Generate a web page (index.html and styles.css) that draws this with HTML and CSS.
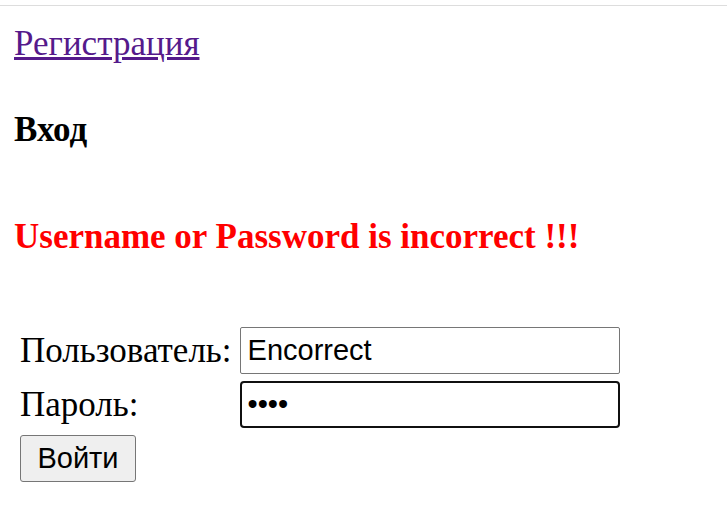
FILE: index.html
```html
<!DOCTYPE html>
<html lang="ru">
<head>
<meta charset="utf-8">
<title>Вход</title>
<link rel="stylesheet" href="styles.css">
</head>
<body>
<div class="topline"></div>
<main class="page">
  <a class="reg-link" href="#">Регистрация</a>
  <h4 class="title">Вход</h4>
  <h3 class="error">Username or Password is incorrect !!!</h3>
  <form class="login-form">
    <label class="label" for="user">Пользователь:</label>
    <input class="field" id="user" type="text" value="Encorrect">
    <label class="label" for="pass">Пароль:</label>
    <input class="field field-focus" id="pass" type="password" value="1234">
    <button class="submit" type="button">Войти</button>
  </form>
</main>
</body>
</html>
```
FILE: styles.css
```css
html, body {
  margin: 0;
  padding: 0;
  background: #ffffff;
}
body {
  font-family: "Liberation Serif", "Times New Roman", serif;
  font-size: 35px;
  color: #000;
}
.topline {
  height: 1px;
  margin-top: 5px;
  background: #dddddd;
}
.page {
  padding: 0 14px;
}
.reg-link {
  display: inline-block;
  margin-top: 18px;
  color: #551a8b;
  text-decoration: underline;
  line-height: 40px;
}
.title {
  font-size: 35px;
  font-weight: bold;
  margin: 46px 0 0;
  line-height: 40px;
}
.error {
  color: #ff0000;
  font-size: 35px;
  font-weight: bold;
  margin: 67px 0 0;
  line-height: 40px;
}
.login-form {
  display: grid;
  grid-template-columns: auto 380px;
  justify-content: start;
  column-gap: 8px;
  row-gap: 7px;
  align-items: center;
  justify-items: start;
  margin: 70px 0 0 6px;
}
.label {
  line-height: 40px;
}
.field {
  box-sizing: border-box;
  width: 380px;
  height: 47px;
  border: 1px solid #767676;
  border-radius: 2px;
  padding: 0 7px;
  font-family: "Liberation Sans", Arial, sans-serif;
  font-size: 29px;
  color: #000;
  background: #fff;
  outline: none;
}
.field-focus {
  border: 2px solid #101010;
  border-radius: 4px;
  padding: 0 6px;
}
.submit {
  box-sizing: border-box;
  width: 116px;
  height: 47px;
  padding: 0;
  border: 1px solid #767676;
  border-radius: 3px;
  background: #efefef;
  font-family: "Liberation Sans", Arial, sans-serif;
  font-size: 29px;
  color: #000;
}
```
